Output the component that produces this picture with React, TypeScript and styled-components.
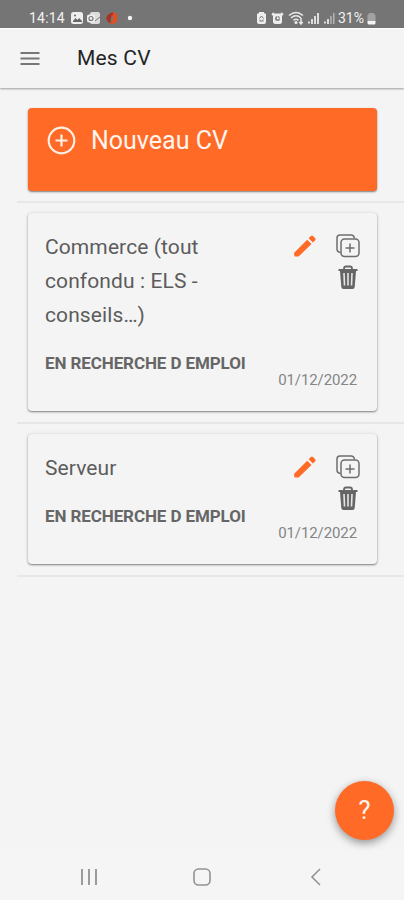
import React from "react";
import styled, { createGlobalStyle } from "styled-components";

const ORANGE = "#ff6a26";

const GlobalStyle = createGlobalStyle`
  * { box-sizing: border-box; }
  body { margin: 0; background: #f4f4f4; font-family: Roboto, "Liberation Sans", sans-serif; }
  svg { display: block; flex: none; }
`;

const Screen = styled.div`
  display: flex;
  flex-direction: column;
  width: 404px;
  height: 900px;
  overflow: hidden;
  background: #f4f4f4;
`;

const StatusBar = styled.div`
  display: flex;
  align-items: center;
  height: 28px;
  padding: 8px 28px 0 29px;
  background: #757575;
  color: #f1f1f1;
  font-size: 14px;
  line-height: 20px;
  flex: none;
`;

const Clock = styled.span`
  width: 41px;
  letter-spacing: 0.2px;
`;

const Battery = styled.span`
  margin-right: 3px;
`;

const Spacer = styled.div`
  flex: 1;
`;

const Header = styled.header`
  display: flex;
  align-items: center;
  height: 60px;
  flex: none;
  padding-left: 20px;
  gap: 37px;
  border-top: 1px solid #ffffff;
  box-shadow: 0 1px 2px rgba(0, 0, 0, 0.36);
`;

const PageTitle = styled.h1`
  margin: -2px 0 0;
  font-size: 21px;
  font-weight: 400;
  letter-spacing: 0.2px;
  color: #242424;
`;

const List = styled.main`
  flex: 1;
  padding: 10px 0 0 17px;
`;

const Item = styled.section`
  padding: 10px 27px 11px 11px;
  border-bottom: 2px solid #e7e7e7;
`;

const CreateItem = styled(Item)`
  padding-bottom: 10px;
`;

const Card = styled.article<{ $height: number }>`
  display: flex;
  justify-content: space-between;
  height: ${(p) => p.$height}px;
  padding: 18px 17px 0;
  border-radius: 4px;
  background: #f4f4f4;
  box-shadow: 0 1px 2px rgba(0, 0, 0, 0.46), 0 0 4px rgba(0, 0, 0, 0.08);
`;

const CreateButton = styled.button`
  display: flex;
  align-items: flex-start;
  gap: 15px;
  width: 100%;
  height: 83px;
  padding: 18px 19px;
  border: 0;
  border-radius: 4px;
  background: ${ORANGE};
  color: #fff5ee;
  font: 400 25px/29px Roboto, sans-serif;
  box-shadow: 0 1px 2px rgba(0, 0, 0, 0.5);
`;

const Details = styled.div`
  width: 190px;
`;

const CardTitle = styled.h2`
  margin: 0;
  font-size: 21px;
  font-weight: 400;
  line-height: 33.8px;
  letter-spacing: 0.1px;
  color: #5c5c5c;
`;

const Status = styled.p`
  margin: 13.5px 0 0;
  font-size: 17px;
  font-weight: 700;
  line-height: 34px;
  letter-spacing: -0.1px;
  white-space: nowrap;
  color: #666666;
`;

const Side = styled.div`
  display: flex;
  flex-direction: column;
  align-items: flex-end;
  justify-content: space-between;
  padding: 2px 0 22px;
`;

const Actions = styled.div`
  display: grid;
  grid-template-columns: 26px 26px;
  column-gap: 17px;
  row-gap: 6px;
  margin-right: -0.5px;
`;

const TrashCell = styled.div`
  grid-column: 2;
`;

const DateText = styled.time`
  font-size: 15px;
  line-height: 18px;
  letter-spacing: -0.1px;
  color: #858585;
  margin-right: 3px;
`;

const HelpButton = styled.button`
  position: absolute;
  left: 335px;
  top: 781px;
  width: 59px;
  height: 59px;
  padding: 0;
  border: 0;
  border-radius: 50%;
  background: ${ORANGE};
  color: #fff5ee;
  font: 400 26px/59px Roboto, sans-serif;
  box-shadow: 0 3px 8px rgba(0, 0, 0, 0.4);
`;

const SystemNav = styled.nav`
  display: flex;
  align-items: center;
  height: 51px;
  padding: 4px 0 0 77px;
  background: #f5f5f5;
`;

const HomeIcon = styled.svg`
  margin: 0 96px 0 91px;
`;

const NotificationIcons = () => (
  <svg width="66" height="14" viewBox="0 0 66 14">
    <rect x="1" y="1" width="12" height="12" rx="2.5" fill="#eee" />
    <path d="M3 10l2.5-3 2 2 1.6-2L12 10v1H3z" fill="#666" />
    <circle cx="5" cy="4.5" r="1" fill="#666" />
    <rect x="20" y="1" width="10" height="12" rx="2" fill="#ddd" />
    <path d="M21 7l4 3 5-4" fill="none" stroke="#777" />
    <rect x="17" y="3.5" width="8" height="8" rx="2" fill="#eee" />
    <circle cx="21" cy="7.5" r="2" fill="none" stroke="#777" strokeWidth="1.2" />
    <path d="M43 1l-5 2.5-2 4 2.500 4 3 1-1-3 1-5 2.500-1z" fill="#a93220" />
    <path d="M42.500 1l4.500 2v8l-4.500 2-3.500-1 4-1.500V3.500z" fill="#ed4b1d" />
    <circle cx="60" cy="7" r="2.2" fill="#f4f4f4" />
  </svg>
);

const SystemIcons = () => (
  <svg width="82" height="14" viewBox="0 0 82 14">
    <path d="M3 1h5v1l2 1v8q0 2-2 2H3q-2 0-2-2V3l2-1z" fill="#eee" />
    <path d="M3.5 7.5l2-2.5 2 2.5M3.5 10h4M4 8.5v1M7 8.5v1" stroke="#777" fill="none" />
    <path d="M16 4l2-2M27 4l-2-2" stroke="#eee" strokeWidth="1.8" />
    <rect x="17" y="2.5" width="9" height="10.500" rx="2.5" fill="#eee" />
    <circle cx="21.5" cy="7.5" r="2.5" fill="#858585" />
    <path d="M21.5 5.5V8l2-1" stroke="#eee" fill="none" />
    <g fill="none" stroke="#e8e8e8" strokeWidth="1.5">
      <path d="M33 4.5q7-6 14 0M35 7q5-4.5 10 0M37.5 9.3q2.5-2 5 0" />
      <path d="M45 7v6m-1.7-2l1.7 2 1.7-2" />
    </g>
    <circle cx="40" cy="11.5" r="1.5" fill="#eee" />
    <g fill="#ddd">
      <rect x="52" y="10.5" width="2" height="2" />
      <rect x="55" y="8" width="2" height="5" />
      <rect x="58" y="5" width="2" height="8" />
      <rect x="61" y="2" width="2" height="11" />
      <rect x="68" y="10.5" width="2" height="2" />
      <rect x="71" y="8" width="2" height="5" />
      <rect x="74" y="5" width="2" height="8" opacity=".45" />
      <rect x="77" y="2" width="1.5" height="11" opacity=".6" />
    </g>
  </svg>
);

const BatteryIcon = () => (
  <svg width="9" height="13" viewBox="0 0 9 13">
    <path d="M2 1h5v1l1.5 1v7H.5V3L2 2z" fill="#a2a2a2" />
    <path d="M.5 9h8v2q0 1.5-1.5 1.5H2Q.5 12.500.5 11z" fill="#f5f5f5" />
  </svg>
);

const MenuIcon = () => (
  <svg width="20" height="16" viewBox="0 0 20 16" stroke="#777" strokeWidth="2">
    <path d="M.5 2h19M.5 7.500h19M.5 13h19" />
  </svg>
);

const PlusCircleIcon = () => (
  <svg width="29" height="29" viewBox="0 0 29 29" fill="none" stroke="#fff0e6" strokeWidth="2.200">
    <circle cx="14.500" cy="14.500" r="12.800" />
    <path d="M14.500 8.500v12M8.500 14.500h12" />
  </svg>
);

const PencilIcon = () => (
  <svg width="26" height="26" viewBox="0 0 26 26" fill={ORANGE}>
    <path d="M2.200 19.700v2.300q0 1.500 1.500 1.500h2.900L19.500 11l-4.300-4.300z" />
    <path d="M16.600 5.200l2.300-2.200q1-1 2.100 0l2.200 2.200q1 1 0 2L20.900 9.500z" />
  </svg>
);

const DuplicateIcon = () => (
  <svg width="26" height="26" viewBox="0 0 26 26" fill="none" stroke="#6d6d6d" strokeWidth="1.500">
    <path d="M5.500 19.500Q2 19 2 16V5q0-3 3-3h11q3 0 3.500 3.500" />
    <rect x="6" y="6" width="18" height="17.500" rx="3.500" />
    <path d="M15 10.500v9M10.500 15h9" />
  </svg>
);

const TrashIcon = () => (
  <svg width="26" height="26" viewBox="0 0 26 26">
    <path d="M3.500 5h19M9 5V3.500Q9 1.500 11 1.500h4Q17 1.500 17 3.500V5" fill="none" stroke="#666" strokeWidth="1.800" />
    <path d="M5 6h16l-1.300 16q-.2 2-2.200 2h-9q-2 0-2.200-2z" fill="#646464" />
    <path d="M9 8l.5 12.500M13 8v12.500M17 8l-.5 12.500" stroke="#e5e5e5" strokeWidth="1.600" />
  </svg>
);

interface CvProps {
  title: string;
  height: number;
}

const CvItem = ({ title, height }: CvProps) => (
  <Item>
    <Card $height={height}>
      <Details>
        <CardTitle>{title}</CardTitle>
        <Status>EN RECHERCHE D EMPLOI</Status>
      </Details>
      <Side>
        <Actions>
          <PencilIcon />
          <DuplicateIcon />
          <TrashCell><TrashIcon /></TrashCell>
        </Actions>
        <DateText>01/12/2022</DateText>
      </Side>
    </Card>
  </Item>
);

export default function App() {
  return (
    <Screen>
      <GlobalStyle />
      <StatusBar>
        <Clock>14:14</Clock>
        <NotificationIcons />
        <Spacer />
        <SystemIcons />
        <Battery>31%</Battery>
        <BatteryIcon />
      </StatusBar>
      <Header>
        <MenuIcon />
        <PageTitle>Mes CV</PageTitle>
      </Header>
      <List>
        <CreateItem>
          <CreateButton>
            <PlusCircleIcon />
            <span>Nouveau CV</span>
          </CreateButton>
        </CreateItem>
        <CvItem title="Commerce (tout confondu : ELS - conseils…)" height={198} />
        <CvItem title="Serveur" height={130} />
      </List>
      <HelpButton>?</HelpButton>
      <SystemNav>
        <svg width="24" height="20" viewBox="0 0 24 20" stroke="#929292" strokeWidth="1.800">
          <path d="M5 2v16M12 2v16M19 2v16" />
        </svg>
        <HomeIcon width="20" height="20" viewBox="0 0 20 20" fill="none" stroke="#929292" strokeWidth="1.600">
          <rect x="2" y="2" width="16" height="16" rx="4.500" />
        </HomeIcon>
        <svg width="16" height="20" viewBox="0 0 16 20" fill="none" stroke="#929292" strokeWidth="1.600">
          <path d="M12 2L4 10l8 8" />
        </svg>
      </SystemNav>
    </Screen>
  );
}
